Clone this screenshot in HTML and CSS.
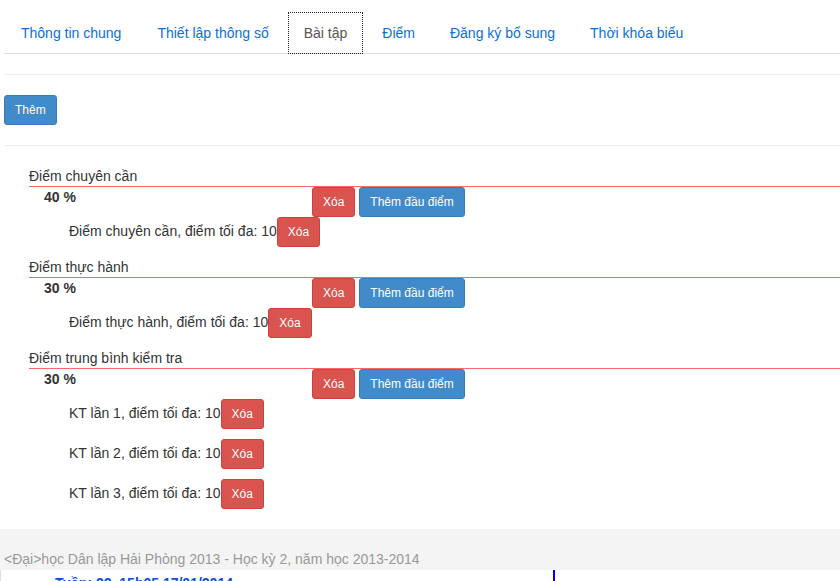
FILE: index.html
```html
<!DOCTYPE html>
<html lang="vi">
<head>
<meta charset="utf-8">
<title>Bài tập</title>
<link rel="stylesheet" href="styles.css">
</head>
<body>
<div class="page">
  <ul class="tabs">
    <li><a href="#">Thông tin chung</a></li>
    <li><a href="#">Thiết lập thông số</a></li>
    <li class="active"><a href="#">Bài tập</a></li>
    <li><a href="#">Điểm</a></li>
    <li><a href="#">Đăng ký bổ sung</a></li>
    <li><a href="#">Thời khóa biểu</a></li>
  </ul>
  <div class="content">
    <hr class="sep">
    <button class="btn btn-primary">Thêm</button>
    <hr class="sep">

    <div class="group">
      <div class="group-title">Điểm chuyên cần</div>
      <div class="group-head">
        <span class="pct">40 %</span>
        <span class="actions"><button class="btn btn-danger">Xóa</button><button class="btn btn-primary">Thêm đầu điểm</button></span>
      </div>
      <div class="item">Điểm chuyên cần, điểm tối đa: 10<button class="btn btn-danger">Xóa</button></div>
    </div>

    <div class="group">
      <div class="group-title">Điểm thực hành</div>
      <div class="group-head">
        <span class="pct">30 %</span>
        <span class="actions"><button class="btn btn-danger">Xóa</button><button class="btn btn-primary">Thêm đầu điểm</button></span>
      </div>
      <div class="item">Điểm thực hành, điểm tối đa: 10<button class="btn btn-danger">Xóa</button></div>
    </div>

    <div class="group">
      <div class="group-title">Điểm trung bình kiểm tra</div>
      <div class="group-head">
        <span class="pct">30 %</span>
        <span class="actions"><button class="btn btn-danger">Xóa</button><button class="btn btn-primary">Thêm đầu điểm</button></span>
      </div>
      <div class="item">KT lần 1, điểm tối đa: 10<button class="btn btn-danger">Xóa</button></div>
      <div class="item">KT lần 2, điểm tối đa: 10<button class="btn btn-danger">Xóa</button></div>
      <div class="item">KT lần 3, điểm tối đa: 10<button class="btn btn-danger">Xóa</button></div>
    </div>
  </div>
</div>
<div class="footer">&lt;Đại&gt;học Dân lập Hải Phòng 2013 - Học kỳ 2, năm học 2013-2014</div>
<div class="week">
  <div class="week-main">Tuần: 22, 15h05 17/01/2014</div>
  <div class="week-side"></div>
</div>
</body>
</html>
```
FILE: styles.css
```css
html, body {
  margin: 0;
  padding: 0;
  background: #fff;
  font-family: "Liberation Sans", Arial, sans-serif;
  font-size: 14px;
  line-height: 20px;
  color: #333;
  overflow: hidden;
}

.page {
  padding: 12px 0 0 4px;
}

.tabs {
  list-style: none;
  margin: 0;
  padding: 0;
  display: flex;
  border-bottom: 1px solid #ddd;
}

.tabs li {
  margin: 0 3px -1px 0;
}

.tabs a {
  display: block;
  padding: 10px 15px;
  line-height: 20px;
  color: #0b70d6;
  text-decoration: none;
  border: 1px solid transparent;
}

.tabs li:first-child a {
  padding-left: 16px;
  padding-right: 16px;
}

.tabs .active a {
  color: #555;
  border: 1px dotted #222;
}

.sep {
  margin: 20px 0;
  border: 0;
  border-top: 1px solid #eee;
  height: 0;
}

.btn {
  display: inline-block;
  font-family: "Liberation Sans", Arial, sans-serif;
  font-size: 12px;
  line-height: 18px;
  padding: 5px 10px;
  border: 1px solid transparent;
  border-radius: 3px;
  color: #fff;
  cursor: pointer;
  margin: 0;
}

.btn-primary {
  background: #428bca;
  border-color: #357ebd;
}

.btn-danger {
  background: #d9534f;
  border-color: #d43f3a;
}

.content {
  padding-bottom: 10px;
}

.content > .btn {
  display: block;
}

.group {
  margin-left: 25px;
}

.group-title {
  line-height: 20px;
  border-bottom: 1px solid #f66;
}

.group-head {
  display: grid;
  grid-template-columns: 283px auto;
  align-items: start;
}

.pct {
  padding-left: 15px;
  font-weight: bold;
  line-height: 20px;
}

.actions {
  display: flex;
  gap: 4px;
}

.item {
  display: flex;
  align-items: baseline;
  padding-left: 40px;
  margin-bottom: 10px;
}

.footer {
  background: #f4f4f4;
  color: #999;
  padding: 20px 0 1px 4px;
  line-height: 20px;
}

.week {
  display: flex;
  height: 11px;
  overflow: hidden;
}

.week-main {
  width: 498px;
  padding-left: 54px;
  border-left: 1px solid #ddd;
  font-weight: bold;
  color: #0a4fd6;
  padding-top: 3px;
}

.week-side {
  border-left: 2px solid #00f;
  flex: 1;
}
```
